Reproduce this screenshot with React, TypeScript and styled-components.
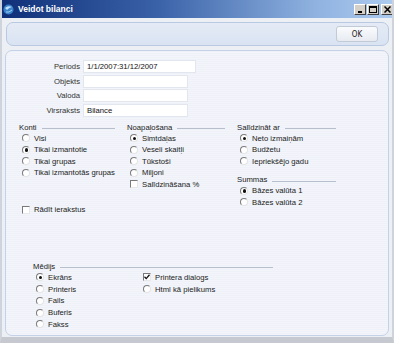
import styled, { createGlobalStyle } from "styled-components";

const GlobalStyle = createGlobalStyle`
  html, body {
    margin: 0;
    padding: 0;
    background: #c8ccd4;
  }
  * {
    box-sizing: border-box;
  }
`;

const Window = styled.div`
  width: 394px;
  height: 343px;
  display: flex;
  flex-direction: column;
  background: #eceff4;
  border-left: 2px solid #cfd3db;
  border-right: 2px solid #cfd3db;
  border-bottom: 6px solid #c6c9cf;
  font-family: "Liberation Sans", Arial, sans-serif;
  font-size: 7.7px;
  color: #222;
  overflow: hidden;
`;

const TitleBar = styled.div`
  height: 18px;
  margin: 0 -2px;
  display: flex;
  align-items: center;
  padding: 0 1px 0 3px;
  background: linear-gradient(90deg, #0f2f78 0%, #3a62a8 40%, #8fb2e0 80%, #aecbef 100%);
`;

const TitleText = styled.span`
  margin-left: 4px;
  color: #ffffff;
  font-weight: bold;
  font-size: 8.5px;
  flex: 1;
`;

const Controls = styled.div`
  display: flex;
  gap: 1px;
`;

const ControlButton = styled.div`
  width: 12px;
  height: 11px;
  background: #d4d0c8;
  border: 1px solid;
  border-color: #ffffff #404040 #404040 #ffffff;
  display: flex;
  align-items: center;
  justify-content: center;
  margin-left: ${(p: { $gap?: number }) => p.$gap ?? 0}px;
`;

const Toolbar = styled.div`
  margin: 4px 3px 0 4px;
  height: 24px;
  border: 1px solid #b9c9e2;
  border-radius: 7px;
  background: linear-gradient(180deg, #e4ebf6 0%, #d9e3f2 100%);
  display: flex;
  align-items: center;
  justify-content: flex-end;
  padding-right: 10px;
`;

const OkButton = styled.button`
  width: 42px;
  height: 16px;
  padding: 0;
  border: 1px solid #c2cad6;
  border-radius: 3px;
  background: linear-gradient(180deg, #fafbfd 0%, #e7ebf1 100%);
  font-family: "DejaVu Sans Condensed", "DejaVu Sans", sans-serif;
  font-size: 8px;
  color: #222;
`;

const Panel = styled.div`
  margin: 4px 3px 1px 3px;
  flex: 1;
  border: 1px solid #c4d1e6;
  border-radius: 7px;
  background: repeating-linear-gradient(180deg, #eef1f8 0px, #eef1f8 1px, #f3f5fa 1px, #f3f5fa 2px);
  display: flex;
  flex-direction: column;
`;

const Fields = styled.div`
  margin-top: 9px;
  display: grid;
  grid-template-columns: 74px auto;
  column-gap: 3px;
  row-gap: 1.7px;
  align-items: center;
`;

const Label = styled.span`
  text-align: right;
  color: #333;
`;

const Input = styled.div<{ $w: number }>`
  width: ${(p) => p.$w}px;
  height: 13px;
  background: #ffffff;
  border: 1px solid #e2e6ee;
  padding-left: 3px;
  line-height: 11px;
  color: #111;
`;

const Groups = styled.div`
  margin-top: 4.5px;
  display: grid;
  grid-template-columns: 96px 98px 99px;
  column-gap: 12px;
  padding-left: 13px;
  align-items: start;
`;

const Column = styled.div`
  display: flex;
  flex-direction: column;
`;

const GroupHeader = styled.div<{ $top?: number }>`
  height: 11px;
  display: flex;
  align-items: center;
  margin-top: ${(p) => p.$top ?? 0}px;
  color: #222;
  &::after {
    content: "";
    flex: 1;
    margin-left: 5px;
    margin-top: 3px;
    border-top: 1px solid #b8bfcc;
  }
`;

const Option = styled.div<{ $top?: number; $h?: number }>`
  height: ${(p) => p.$h ?? 11.5}px;
  display: flex;
  align-items: center;
  padding-left: 3px;
  margin-top: ${(p) => p.$top ?? 0}px;
  white-space: nowrap;
`;

const RadioMark = styled.span<{ $on?: boolean }>`
  width: 8px;
  height: 8px;
  border-radius: 50%;
  background: #fff;
  border: 1px solid;
  border-color: #7a7a7a #e4e4e4 #e4e4e4 #7a7a7a;
  margin-right: 4px;
  position: relative;
  flex: none;
  &::after {
    content: "";
    display: ${(p) => (p.$on ? "block" : "none")};
    position: absolute;
    left: 1.5px;
    top: 1.5px;
    width: 3.2px;
    height: 3.2px;
    border-radius: 50%;
    background: #111;
  }
`;

const CheckMark = styled.span`
  width: 8px;
  height: 8px;
  background: #fff;
  border: 1px solid;
  border-color: #7a7a7a #e8e8e8 #e8e8e8 #7a7a7a;
  margin-right: 4px;
  flex: none;
  display: flex;
  align-items: center;
  justify-content: center;
`;

const Media = styled.div`
  margin: 45px 0 0 27px;
  width: 240px;
`;

const MediaColumns = styled.div`
  display: grid;
  grid-template-columns: 107px 1fr;
`;

function Radio({ label, on, top, h }: { label: string; on?: boolean; top?: number; h?: number }) {
  return (
    <Option $top={top} $h={h}>
      <RadioMark $on={on} />
      {label}
    </Option>
  );
}

function Check({ label, on, top, h }: { label: string; on?: boolean; top?: number; h?: number }) {
  return (
    <Option $top={top} $h={h}>
      <CheckMark>
        {on && (
          <svg width="6" height="6" viewBox="0 0 6 6">
            <path d="M0.5 2.8 L2.2 4.6 L5.5 0.8" stroke="#111" strokeWidth="1.3" fill="none" />
          </svg>
        )}
      </CheckMark>
      {label}
    </Option>
  );
}

export default function App() {
  return (
    <>
      <GlobalStyle />
      <Window>
        <TitleBar>
          <svg width="11" height="11" viewBox="0 0 11 11">
            <circle cx="5.5" cy="5.5" r="5" fill="#3b82c8" />
            <path d="M2 4 Q5 1 9 3 Q6 3.5 4 6 Z" fill="#bfe3ff" />
            <path d="M3 8 Q6 9 9 6" stroke="#9fd0f5" strokeWidth="1" fill="none" />
          </svg>
          <TitleText>Veidot bilanci</TitleText>
          <Controls>
            <ControlButton>
              <svg width="7" height="7" viewBox="0 0 7 7">
                <rect x="1" y="5" width="4" height="2" fill="#000" />
              </svg>
            </ControlButton>
            <ControlButton>
              <svg width="8" height="7" viewBox="0 0 8 7">
                <rect x="0.5" y="0.5" width="7" height="6" fill="none" stroke="#000" />
                <rect x="0.5" y="0.5" width="7" height="1.5" fill="#000" />
              </svg>
            </ControlButton>
            <ControlButton $gap={1}>
              <svg width="7" height="7" viewBox="0 0 7 7">
                <path d="M0.5 0.5 L6.5 6.5 M6.5 0.5 L0.5 6.5" stroke="#000" strokeWidth="1.5" />
              </svg>
            </ControlButton>
          </Controls>
        </TitleBar>

        <Toolbar>
          <OkButton>OK</OkButton>
        </Toolbar>

        <Panel>
          <Fields>
            <Label>Periods</Label>
            <Input $w={113}>1/1/2007:31/12/2007</Input>
            <Label>Objekts</Label>
            <Input $w={105} />
            <Label>Valoda</Label>
            <Input $w={105} />
            <Label>Virsraksts</Label>
            <Input $w={105}>Bilance</Input>
          </Fields>

          <Groups>
            <Column>
              <GroupHeader>Konti</GroupHeader>
              <Radio label="Visi" />
              <Radio label="Tikai izmantotie" on />
              <Radio label="Tikai grupas" />
              <Radio label="Tikai izmantotās grupas" />
              <Check label="Rādīt ierakstus" top={25.5} />
            </Column>
            <Column>
              <GroupHeader>Noapaļošana</GroupHeader>
              <Radio label="Simtdaļas" on />
              <Radio label="Veseli skaitļi" />
              <Radio label="Tūkstoši" />
              <Radio label="Miljoni" />
              <Check label="Salīdzināšana %" />
            </Column>
            <Column>
              <GroupHeader>Salīdzināt ar</GroupHeader>
              <Radio label="Neto izmaiņām" on />
              <Radio label="Budžetu" />
              <Radio label="Iepriekšējo gadu" />
              <GroupHeader $top={7}>Summas</GroupHeader>
              <Radio label="Bāzes valūta 1" on />
              <Radio label="Bāzes valūta 2" />
            </Column>
          </Groups>

          <Media>
            <GroupHeader>Mēdijs</GroupHeader>
            <MediaColumns>
              <Column>
                <Radio label="Ekrāns" on h={11.75} />
                <Radio label="Printeris" h={11.75} />
                <Radio label="Fails" h={11.75} />
                <Radio label="Buferis" h={11.75} />
                <Radio label="Fakss" h={11.75} />
              </Column>
              <Column>
                <Check label="Printera dialogs" on h={11.75} />
                <Radio label="Html kā pielikums" h={11.75} />
              </Column>
            </MediaColumns>
          </Media>
        </Panel>
      </Window>
    </>
  );
}
